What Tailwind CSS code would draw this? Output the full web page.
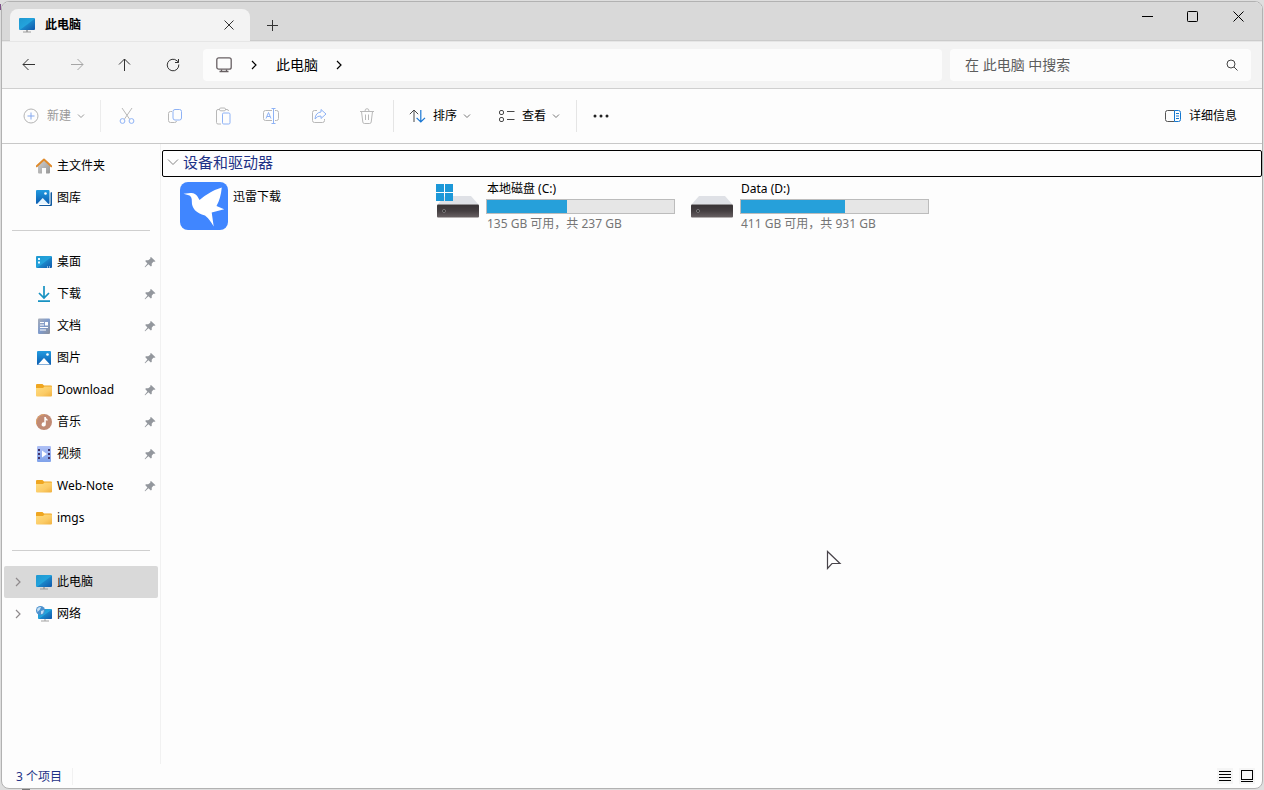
<!DOCTYPE html>
<html lang="zh-CN">
<head>
<meta charset="utf-8">
<title>此电脑</title>
<script src="https://cdn.jsdelivr.net/npm/@tailwindcss/browser@4"></script>
</head>
<body class="relative h-screen overflow-hidden bg-[#dedede] p-px font-['Noto_Sans','Noto_Sans_CJK_SC',sans-serif] text-xs text-black">

<!-- Shared symbols -->
<svg class="absolute size-0" aria-hidden="true">
  <defs>
    <linearGradient id="gScreen" x1="0" y1="0" x2="1" y2="1"><stop offset="0" stop-color="#1f98d0"/><stop offset=".5" stop-color="#23a3dc"/><stop offset=".55" stop-color="#1b85c8"/><stop offset="1" stop-color="#0f57ab"/></linearGradient>
    <linearGradient id="gFolder" x1="0" y1="0" x2="1" y2="1"><stop offset="0" stop-color="#ffdd80"/><stop offset=".6" stop-color="#fbcb66"/><stop offset="1" stop-color="#f0b03e"/></linearGradient>
    <linearGradient id="gPic" x1="0" y1="0" x2="0" y2="1"><stop offset="0" stop-color="#229be0"/><stop offset="1" stop-color="#0b5cb0"/></linearGradient>
    <linearGradient id="gHome" x1="0" y1="0" x2="1" y2="1"><stop offset="0" stop-color="#d2d2d2"/><stop offset="1" stop-color="#969696"/></linearGradient>
    <linearGradient id="gDisk" x1="0" y1="0" x2="0" y2="1"><stop offset="0" stop-color="#383335"/><stop offset=".5" stop-color="#453f42"/><stop offset="1" stop-color="#696264"/></linearGradient>
    <linearGradient id="gDoc" x1="0" y1="0" x2="1" y2="1"><stop offset="0" stop-color="#a9aeb8"/><stop offset=".5" stop-color="#7e9bcd"/><stop offset="1" stop-color="#8c8f98"/></linearGradient>
    <linearGradient id="gVid" x1="0" y1="0" x2="0" y2="1"><stop offset="0" stop-color="#b0c1f6"/><stop offset="1" stop-color="#7fa2ea"/></linearGradient>
  </defs>
  <symbol id="pc" viewBox="0 0 16 16"><rect y="1" width="16" height="12" rx="1" fill="url(#gScreen)"/><path d="M7 13h2v2H7z" fill="#a8a8a8"/><path d="M4 14.500h8v1H4z" fill="#9b9b9b"/></symbol>
  <symbol id="folder" viewBox="0 0 16 16"><path d="M0 3q0-1 1-1h5.500l1.500 1.500h7q1 0 1 1V8H0z" fill="#efa621"/><path d="M0 6h7l1.500-1.500H16V13.500q0 1-1 1H1q-1 0-1-1z" fill="url(#gFolder)"/></symbol>
  <symbol id="pin" viewBox="0 0 12 12"><path d="M7 1l4.500 4.200-1 .6-1.200-.1-1.600 2 .1 2.100-.9.7-2.500-2.300L1.200 11.300.6 10.900l2.800-3.500L1.200 5l.8-.8 2.200.1L6.300 2.800V1.500z" fill="#93979d"/></symbol>
  <symbol id="down" viewBox="0 0 8 8"><path d="M1 2.500l3 3 3-3" fill="none" stroke="currentColor"/></symbol>
  <symbol id="right" viewBox="0 0 8 10"><path d="M2 1l4 4-4 4" fill="none" stroke="currentColor" stroke-width="1.200"/></symbol>
  <symbol id="disk" viewBox="0 0 42 22"><path d="M8 0h26l7.500 8.500H.5z" fill="#dfe1e6"/><path d="M0 9.500q0-1 1-1h40q1 0 1 1v11q0 1-1 1H1q-1 0-1-1z" fill="url(#gDisk)"/><circle cx="7" cy="15" r="1.500" fill="#222" stroke="#918d8f" stroke-width=".8"/></symbol>
</svg>

<div class="flex h-full flex-col overflow-hidden rounded-lg border border-[#b2b2b2] bg-[#fdfdfd]">

  <!-- Title bar -->
  <header class="flex h-10 shrink-0 items-end border-b border-[#e6e6e6] bg-[#d9d9d9] shadow-[inset_0_-1px_0_#cbcbcb]">
    <div class="ml-2 flex h-8 w-60 items-center rounded-t-lg bg-[#f3f3f3] pr-[11px] pl-[9px]">
      <svg class="size-4"><use href="#pc"/></svg>
      <span class="ml-2.5 flex-1 font-bold">此电脑</span>
      <button aria-label="关闭标签页" class="flex size-5 items-center justify-center"><svg class="size-2.5" viewBox="0 0 10 10" fill="none" stroke="#333"><path d="M.5.5l9 9m0-9l-9 9"/></svg></button>
    </div>
    <button aria-label="新建标签页" class="ml-1.5 flex h-8 w-8 items-center justify-center"><svg class="size-[11px]" viewBox="0 0 11 11" stroke="#333"><path d="M5.500 0v11M0 5.500h11"/></svg></button>
    <div class="ml-auto flex h-full pb-2.5">
      <button aria-label="最小化" class="flex w-[45px] items-center justify-center"><svg class="size-[11px]" viewBox="0 0 11 11" stroke="#000"><path d="M0 5.500h11"/></svg></button>
      <button aria-label="最大化" class="flex w-[45px] items-center justify-center"><svg class="size-[11px]" viewBox="0 0 11 11" stroke="#000" fill="none"><rect x=".5" y=".5" width="10" height="10" rx=".8"/></svg></button>
      <button aria-label="关闭" class="flex w-[47px] items-center justify-center"><svg class="size-[11px]" viewBox="0 0 11 11" stroke="#000"><path d="M.5.5l10 10m0-10l-10 10"/></svg></button>
    </div>
  </header>

  <!-- Navigation -->
  <nav class="flex h-[47px] shrink-0 items-center border-b border-[#cfcfcf] bg-[#f3f3f3] pr-[11px] pl-[3px]">
    <button aria-label="后退" class="flex h-8 w-12 items-center justify-center text-[#333]"><svg class="size-4" viewBox="0 0 16 16" fill="none" stroke="currentColor"><path d="M14 7.500H2M7.500 2L2 7.500 7.500 13"/></svg></button>
    <button aria-label="前进" class="flex h-8 w-12 items-center justify-center text-[#a5a5a5]"><svg class="size-4" viewBox="0 0 16 16" fill="none" stroke="currentColor"><path d="M2 7.500h12M8.500 2L14 7.500 8.500 13"/></svg></button>
    <button aria-label="向上" class="flex h-8 w-12 items-center justify-center text-[#333]"><svg class="size-4" viewBox="0 0 16 16" fill="none" stroke="currentColor"><path d="M7.500 14V2M2 7.500L7.500 2 13 7.500"/></svg></button>
    <button aria-label="刷新" class="flex h-8 w-12 items-center justify-center text-[#333]"><svg class="size-4" viewBox="0 0 16 16" fill="none" stroke="currentColor"><path d="M13.800 7.500A5.800 5.800 0 1 1 12 3.800l1.500 1.400M13.500 2v3.500H10"/></svg></button>
    <div class="ml-1.5 flex h-8 flex-1 items-center rounded bg-[#fcfcfc] pl-[13px] text-sm">
      <svg class="size-4" viewBox="0 0 16 16" fill="none" stroke="#675f62" stroke-width="1.300"><rect x=".8" y=".8" width="14.400" height="11.400" rx="2"/><path d="M5.500 12.500v2m5-2v2M3.500 14.500h9"/></svg>
      <svg class="ml-[18px] h-2.5 w-2"><use href="#right"/></svg>
      <button class="ml-[18px]">此电脑</button>
      <svg class="ml-[17px] h-2.5 w-2"><use href="#right"/></svg>
    </div>
    <label class="ml-2 flex h-8 w-[301px] items-center rounded bg-[#fcfcfc] pr-[13px] pl-[15px] text-sm">
      <input type="text" aria-label="搜索" placeholder="在 此电脑 中搜索" class="min-w-0 flex-1 bg-transparent outline-none placeholder:text-[#5d5d5d]">
      <svg class="size-3" viewBox="0 0 12 12" fill="none" stroke="#444"><circle cx="5" cy="5" r="4"/><path d="M8 8l3.500 3.500"/></svg>
    </label>
  </nav>

  <!-- Command bar -->
  <div class="flex h-[55px] shrink-0 items-center border-b border-[#c8c8c8] pr-[25px]">
    <button class="flex h-8 w-[98px] items-center pl-[21px] text-[#999]"><svg class="size-4" viewBox="0 0 16 16" fill="none"><circle cx="8" cy="8" r="7" stroke="#b4b4b4"/><path d="M8 4.500v7M4.500 8h7" stroke="#86a9ee"/></svg><span class="mr-1.5 ml-2">新建</span><svg class="size-2"><use href="#down"/></svg></button>
    <div class="mr-0.5 h-8 w-px bg-[#ececec]"></div>
    <button aria-label="剪切" class="flex h-8 w-12 items-center justify-center"><svg class="size-4" viewBox="0 0 16 16" fill="none"><path d="M3 0l7.500 11M13 0L5.500 11" stroke="#b8b8b8"/><circle cx="3.500" cy="13" r="2.400" stroke="#8eb2f5"/><circle cx="12.500" cy="13" r="2.400" stroke="#8eb2f5"/></svg></button>
    <button aria-label="复制" class="flex h-8 w-12 items-center justify-center"><svg class="size-4" viewBox="0 0 16 16" fill="none"><path d="M5 3.500H3.500q-2 0-2 2v7q0 2 2 2h4q2 0 2-1.500" stroke="#b8b8b8"/><rect x="6" y="1.500" width="8.500" height="10.500" rx="2" stroke="#8eb2f5"/></svg></button>
    <button aria-label="粘贴" class="flex h-8 w-12 items-center justify-center"><svg class="h-[18px] w-4" viewBox="0 0 16 18" fill="none"><path d="M5 2.500H3q-1.500 0-1.500 1.500v11.500q0 1.500 1.500 1.500h3M10 2.500h2q1.500 0 1.500 1.500" stroke="#b8b8b8"/><rect x="4.500" y="1" width="6" height="2.800" rx="1.300" stroke="#b8b8b8"/><rect x="7.500" y="6" width="7.500" height="11" rx="1.200" stroke="#8eb2f5"/></svg></button>
    <button aria-label="重命名" class="flex h-8 w-12 items-center justify-center"><svg class="size-4" viewBox="0 0 16 16" fill="none"><path d="M9 2.500H2.500q-2 0-2 2v6q0 2 2 2H9M12 2.500h1.500q2 0 2 2v6q0 2-2 2H12" stroke="#b8b8b8"/><path d="M3 10.500l2.500-6 2.500 6M4 8.500h3M10.500.5v15M8.500.5h4M8.500 15.500h4" stroke="#8eb2f5"/></svg></button>
    <button aria-label="共享" class="flex h-8 w-12 items-center justify-center"><svg class="size-4" viewBox="0 0 16 16" fill="none" stroke-linejoin="round"><path d="M6 2.500H3.500q-2 0-2 2v8q0 2 2 2h8q2 0 2-2V11" stroke="#b8b8b8"/><path d="M10 1.500L15 6l-5 4.500V8Q6.500 7.500 4 11q.5-6.500 6-7z" stroke="#8eb2f5"/></svg></button>
    <button aria-label="删除" class="flex h-8 w-12 items-center justify-center"><svg class="size-4" viewBox="0 0 16 16" fill="none" stroke="#b8b8b8"><path d="M1 3.500h14M2.500 3.500l1.300 10.500q.2 1.500 1.500 1.500h5.400q1.300 0 1.500-1.500l1.300-10.500M6 3q0-2.300 2-2.300T10 3M6.500 6.500v5.500M9.500 6.500v5.500"/></svg></button>
    <div class="mx-0.5 h-8 w-px bg-[#e5e5e5]"></div>
    <button class="flex h-8 items-center pl-[13px]"><svg class="h-4 w-[17px]" viewBox="0 0 17 16" fill="none"><path d="M5 14V2M.8 6.200L5 2l4.200 4.200" stroke="#484848"/><path d="M11.800 2v12M7.600 9.800l4.200 4.200L16 9.800" stroke="#1976d2" stroke-width="1.200"/></svg><span class="mr-1.5 ml-[7px]">排序</span><svg class="size-2 text-[#777]"><use href="#down"/></svg></button>
    <button class="flex h-8 items-center pl-[27px]"><svg class="h-4 w-[17px]" viewBox="0 0 17 16" fill="none" stroke="#484848"><rect x="1.500" y="2.500" width="4" height="4" rx="1.500"/><rect x="1.500" y="9.500" width="4" height="4" rx="1.500"/><path d="M9 3.500h7.500M9 11.500h7.500"/></svg><span class="mr-1.5 ml-[7px]">查看</span><svg class="size-2 text-[#777]"><use href="#down"/></svg></button>
    <div class="ml-4 h-8 w-px bg-[#e5e5e5]"></div>
    <button aria-label="更多" class="flex h-8 w-12 items-center justify-center"><svg class="h-1 w-4" viewBox="0 0 16 4" fill="#222"><circle cx="2" cy="2" r="1.500"/><circle cx="8" cy="2" r="1.500"/><circle cx="14" cy="2" r="1.500"/></svg></button>
    <button class="ml-auto flex h-8 items-center gap-2"><svg class="h-3 w-4" viewBox="0 0 16 12" fill="none"><path d="M9.500.5h-7q-2 0-2 2v7q0 2 2 2h7" stroke="#555"/><path d="M9.500.5h4q2 0 2 2v7q0 2-2 2h-4zM11 3.500h3M11 6h3M11 8.500h3" stroke="#1477cf"/></svg>详细信息</button>
  </div>

  <div class="flex min-h-0 flex-1">
    <!-- Sidebar -->
    <aside class="w-[159px] shrink-0 border-r border-[#f1f1f1] pt-1.5 pr-[2px] pl-[2px]">
      <a href="#" class="flex h-8 items-center gap-[5px] pl-8"><svg class="size-4" viewBox="0 0 16 16"><path d="M2 7l6-5 6 5v7.500q0 1-1 1h-3V10H6v5.500H3q-1 0-1-1z" fill="url(#gHome)"/><path d="M.7 8.300L8 1.500l7.300 6.800" fill="none" stroke="#df8a2b" stroke-width="1.900" stroke-linecap="round" stroke-linejoin="round"/></svg>主文件夹</a>
      <a href="#" class="flex h-8 items-center gap-[5px] pl-8"><svg class="size-4" viewBox="0 0 16 16"><path d="M15 2q1 0 1 1v12q0 1-1 1H4q-1 0-1-1z" fill="#115a9f"/><rect width="14.500" height="15" rx="1" fill="#fff"/><rect width="13.500" height="14" rx="1" fill="url(#gPic)"/><path d="M1 14l5.700-6 5.800 6z" fill="#e8f6ff"/><circle cx="9.500" cy="3.500" r="1.300" fill="#fff"/></svg>图库</a>
      <div class="flex h-8 items-center px-2"><hr class="w-full border-[#cfcfcf]"></div>
      <a href="#" class="flex h-8 items-center gap-[5px] pr-[2px] pl-8"><svg class="size-4" viewBox="0 0 16 16"><rect y="2" width="16" height="12" rx="1" fill="url(#gScreen)"/><path d="M2 4h2v2H2zM2 7.500h2v2H2z" fill="#e9f8ff"/><path d="M11 12.500h1v1h-1zm2 0h1v1h-1z" fill="#fff"/></svg><span class="flex-1">桌面</span><svg class="size-3"><use href="#pin"/></svg></a>
      <a href="#" class="flex h-8 items-center gap-[5px] pr-[2px] pl-8"><svg class="size-4" viewBox="0 0 16 16" fill="none" stroke="#1792c2" stroke-width="1.700"><path d="M8 0v12M3 7l5 5 5-5M2 15.200h12"/></svg><span class="flex-1">下载</span><svg class="size-3"><use href="#pin"/></svg></a>
      <a href="#" class="flex h-8 items-center gap-[5px] pr-[2px] pl-8"><svg class="size-4" viewBox="0 0 16 16"><rect x="2" y=".5" width="12" height="15.500" rx="1" fill="url(#gDoc)"/><path d="M4 4.500h4M4 7h4M4 9.500h8M4 12h6" stroke="#fff"/><path d="M9 4h3v3.500H9z" fill="#fff"/></svg><span class="flex-1">文档</span><svg class="size-3"><use href="#pin"/></svg></a>
      <a href="#" class="flex h-8 items-center gap-[5px] pr-[2px] pl-8"><svg class="size-4" viewBox="0 0 16 16"><rect x="1" y="1" width="14" height="14" rx="1" fill="url(#gPic)"/><path d="M2 14.500L8 8l6 6.500z" fill="#fff"/><circle cx="11.500" cy="4.500" r="1.300" fill="#fff"/></svg><span class="flex-1">图片</span><svg class="size-3"><use href="#pin"/></svg></a>
      <a href="#" class="flex h-8 items-center gap-[5px] pr-[2px] pl-8"><svg class="size-4"><use href="#folder"/></svg><span class="flex-1">Download</span><svg class="size-3"><use href="#pin"/></svg></a>
      <a href="#" class="flex h-8 items-center gap-[5px] pr-[2px] pl-8"><svg class="size-4" viewBox="0 0 16 16"><circle cx="8" cy="8" r="8" fill="#c08a74"/><path d="M.5 10A8 8 0 0 1 8 .5" stroke="#dda267" fill="none"/><path d="M8.300 3h1.500q.2 1.800 1.700 2.300v1.500q-1-.2-1.700-.9v4.600a2.100 2.100 0 1 1-1.500-2z" fill="#fff"/></svg><span class="flex-1">音乐</span><svg class="size-3"><use href="#pin"/></svg></a>
      <a href="#" class="flex h-8 items-center gap-[5px] pr-[2px] pl-8"><svg class="size-4" viewBox="0 0 16 16"><rect x="1" width="14" height="16" rx="1" fill="url(#gVid)"/><path d="M2 3h2v2H2zm0 4h2v2H2zm0 4h2v2H2zM12 3h2v2h-2zm0 4h2v2h-2zm0 4h2v2h-2z" fill="#443467"/><path d="M6 4.500l5 3.500-5 3.500z" fill="#fff"/></svg><span class="flex-1">视频</span><svg class="size-3"><use href="#pin"/></svg></a>
      <a href="#" class="flex h-8 items-center gap-[5px] pr-[2px] pl-8"><svg class="size-4"><use href="#folder"/></svg><span class="flex-1">Web-Note</span><svg class="size-3"><use href="#pin"/></svg></a>
      <a href="#" class="flex h-8 items-center gap-[5px] pl-8"><svg class="size-4"><use href="#folder"/></svg>imgs</a>
      <div class="flex h-8 items-center px-2"><hr class="w-full border-[#cfcfcf]"></div>
      <a href="#" class="flex h-8 items-center rounded-xs bg-[#d9d9d9] pl-2.5"><svg class="h-2.5 w-2 text-[#8f8a8c]"><use href="#right"/></svg><svg class="mr-[5px] ml-3.5 size-4"><use href="#pc"/></svg>此电脑</a>
      <a href="#" class="flex h-8 items-center pl-2.5"><svg class="h-2.5 w-2 text-[#8f8a8c]"><use href="#right"/></svg><svg class="mr-[5px] ml-3.5 size-4" viewBox="0 0 16 16"><rect x="2" y="3" width="14" height="10" rx=".8" fill="url(#gScreen)"/><path d="M8.500 13h1v1.500h3.500v1H5v-1h3.500z" fill="#a3a3a3"/><circle cx="4.500" cy="4.500" r="4.500" fill="#4c91ce"/><path d="M1 3q1.500-2.500 4-2l-1 2.500L1.500 6zM5 5l3-1-1 3.500-2 .8z" fill="#c6e0f3"/></svg>网络</a>
    </aside>

    <!-- Content -->
    <main class="min-w-0 flex-1 pt-1.5 pl-px">
      <h2 class="rounded-xs border border-black text-[15px] text-[#1e3287]"><button class="flex h-[25px] w-full items-center pb-[3px] pl-1"><svg class="mr-1 h-3 w-3 text-[#858585]" viewBox="0 0 12 12"><path d="M1 3.500l5 5 5-5" fill="none" stroke="currentColor"/></svg>设备和驱动器</button></h2>
      <div class="flex flex-wrap pt-[3px] pl-[18px]">
        <article class="flex w-[254px] gap-[5px] pt-0.5">
          <svg class="size-12 shrink-0" viewBox="0 0 48 48"><rect width="48" height="48" rx="8" fill="#4086ff"/><path d="M3.500 11.800L10.500 11q4.500-.5 7 3.500l2 3.500Q30 9 41.800 5.500q-1.200 11.500-5.300 18.500l7.700 3.200-12.500 3.300 2 14Q29.500 37 25 33.500 11.500 30 11.800 19q.2-4-2.300-5.500z" fill="#fff"/></svg>
          <span class="pt-[7px]">迅雷下载</span>
        </article>
        <article class="flex w-[254px] gap-[5px]">
          <div class="relative w-12 shrink-0 pt-4"><svg class="ml-[3px] h-[22px] w-[42px]"><use href="#disk"/></svg><svg class="absolute top-1 left-0.5 size-[17px]" viewBox="0 0 17 17"><path d="M0 0h8v8H0zM9 0h8v8H9zM0 9h8v8H0zM9 9h8v8H9z" fill="#1c98d8"/></svg></div>
          <div><p id="c" class="flex h-[19px] items-center pb-0.5">本地磁盘 (C:)</p>
            <div role="progressbar" aria-labelledby="c" aria-valuenow="43" class="-ml-px h-[15px] w-[189px] border border-[#bcbcbc] bg-[#e6e6e6]"><div class="h-full bg-[#26a0da]" style="width:43%"></div></div>
            <p class="flex h-5 items-center text-[#757575]">135 GB 可用，共 237 GB</p></div>
        </article>
        <article class="flex w-[254px] gap-[5px]">
          <div class="w-12 shrink-0 pt-4"><svg class="ml-[3px] h-[22px] w-[42px]"><use href="#disk"/></svg></div>
          <div><p id="d" class="flex h-[19px] items-center pb-0.5">Data (D:)</p>
            <div role="progressbar" aria-labelledby="d" aria-valuenow="56" class="-ml-px h-[15px] w-[189px] border border-[#bcbcbc] bg-[#e6e6e6]"><div class="h-full bg-[#26a0da]" style="width:55.800%"></div></div>
            <p class="flex h-5 items-center text-[#757575]">411 GB 可用，共 931 GB</p></div>
        </article>
      </div>
    </main>
  </div>

  <!-- Status bar -->
  <footer class="flex h-6 shrink-0 items-center pr-[7px] pl-3.5 text-[#1e3287]">
    <span class="border-r border-[#f1f1f1] pt-px pr-2.5">3 个项目</span>
    <button aria-label="详细信息视图" class="ml-auto flex size-4 items-center justify-center bg-[#f5f5f5]"><svg class="size-3" viewBox="0 0 12 12" stroke="#000"><path d="M0 1.500h12M0 4.500h12M0 7.500h12M0 10.500h12"/></svg></button>
    <button aria-label="大图标视图" class="ml-1.5 flex size-4 items-center justify-center bg-[#f5f5f5]"><svg class="size-3" viewBox="0 0 12 12" fill="none" stroke="#000"><rect x=".5" y=".5" width="11" height="9"/><path d="M0 11.500h12"/></svg></button>
  </footer>
</div>

<!-- Desktop content showing past the window's edge -->
<div class="absolute bottom-0 left-[22px] h-px w-2 bg-[#777]"></div>
<div class="absolute top-1 left-0 h-1.5 w-px bg-[#7d4f86]"></div>

<!-- Mouse pointer -->
<svg class="pointer-events-none absolute top-[550px] left-[826px] h-5 w-4" viewBox="0 0 16 20"><path d="M1.500 1.500v17l4.500-5h8z" fill="#fff" stroke="#48444a" stroke-width="1.200"/></svg>
</body>
</html>
